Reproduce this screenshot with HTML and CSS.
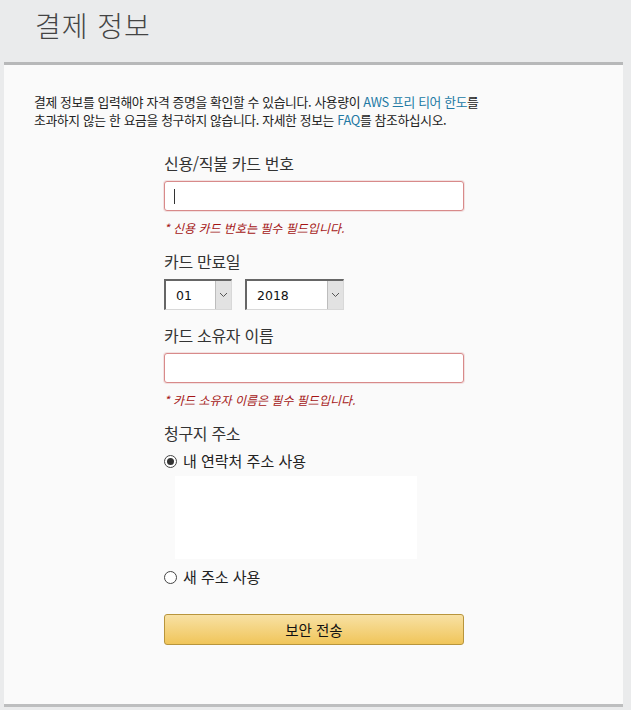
FILE: index.html
```html
<!DOCTYPE html>
<html lang="ko">
<head>
<meta charset="utf-8">
<link rel="stylesheet" href="styles.css">
</head>
<body>
<div class="page">
  <header class="head"><h1 class="title">결제 정보</h1></header>
  <main class="card">
    <p class="intro">결제 정보를 입력해야 자격 증명을 확인할 수 있습니다. 사용량이 <a class="link" href="#">AWS 프리 티어 한도</a>를<br>초과하지 않는 한 요금을 청구하지 않습니다. 자세한 정보는 <a class="link" href="#">FAQ</a>를 참조하십시오.</p>
    <form class="form">
      <div class="field">
        <label class="label">신용/직불 카드 번호</label>
        <div class="input error"><span class="caret"></span></div>
        <div class="err">* 신용 카드 번호는 필수 필드입니다.</div>
      </div>
      <div class="field">
        <label class="label">카드 만료일</label>
        <div class="selects">
          <div class="select s-month"><span class="val">01</span><span class="arrow"><svg width="9" height="6" viewBox="0 0 9 6"><path d="M1 1l3.5 3.5L8 1" fill="none" stroke="#555" stroke-width="1"/></svg></span></div>
          <div class="select s-year"><span class="val">2018</span><span class="arrow"><svg width="9" height="6" viewBox="0 0 9 6"><path d="M1 1l3.5 3.5L8 1" fill="none" stroke="#555" stroke-width="1"/></svg></span></div>
        </div>
      </div>
      <div class="field">
        <label class="label">카드 소유자 이름</label>
        <div class="input error"></div>
        <div class="err">* 카드 소유자 이름은 필수 필드입니다.</div>
      </div>
      <div class="field addr">
        <label class="label">청구지 주소</label>
        <div class="radio"><span class="dot on"></span>내 연락처 주소 사용</div>
        <div class="addrbox"></div>
        <div class="radio"><span class="dot"></span>새 주소 사용</div>
      </div>
      <button class="submit" type="button">보안 전송</button>
    </form>
  </main>
</div>
</body>
</html>
```
FILE: styles.css
```css
* { box-sizing: border-box; }
html, body { margin: 0; padding: 0; }
body {
  background: #eaebec;
  font-family: "Noto Sans CJK KR", "Noto Sans", sans-serif;
  color: #222;
  width: 631px;
  height: 710px;
  overflow: hidden;
}
.page { padding: 0 8px 0 4px; }
.head { height: 62px; padding: 7px 0 0 31px; }
.title {
  margin: 0;
  font-size: 28px;
  font-weight: 300;
  color: #444;
  letter-spacing: 1px;
  line-height: 36px;
}
.card {
  background: #fafafa;
  border-top: 3px solid #b7b8b9;
  border-bottom: 3px solid #bdbebf;
  height: 645px;
  padding: 28px 30px 0 30px;
}
.intro {
  margin: 0;
  font-size: 12.8px;
  line-height: 18px;
  color: #222;
  letter-spacing: -0.35px;
}
.link { color: #2279a4; text-decoration: none; }
.form {
  width: 300px;
  margin: 24px 0 0 130px;
  display: flex;
  flex-direction: column;
}
.field { display: flex; flex-direction: column; }
.label {
  font-size: 16px;
  line-height: 20px;
  color: #333;
  margin-bottom: 8px;
  letter-spacing: -0.3px;
}
.input {
  height: 30px;
  background: #fff;
  border: 1px solid #c9c9c9;
  border-radius: 3px;
  display: flex;
  align-items: center;
  padding-left: 9px;
}
.input.error { border-color: #d88a8a; box-shadow: 0 0 0 1px rgba(220,150,150,0.25); }
.caret { width: 1px; height: 15px; background: #333; }
.err {
  margin-top: 9px;
  font-size: 12px;
  line-height: 15px;
  font-style: italic;
  color: #a41515;
  margin-bottom: 16px;
}
.selects { display: flex; gap: 13px; margin-bottom: 15px; }
.select {
  height: 31px;
  background: #fff;
  border: 1px solid #d8d8d8;
  border-top: 2px solid #666;
  border-left: 2px solid #666;
  display: flex;
  align-items: center;
  justify-content: space-between;
  font-family: "DejaVu Sans", sans-serif;
  font-size: 12.5px;
  color: #111;
}
.s-month { width: 68px; }
.s-year { width: 99px; }
.val { padding-left: 10px; }
.arrow {
  width: 16px;
  height: 28px;
  background: #e2e2e2;
  border-left: 1px solid #bdbdbd;
  display: flex;
  align-items: center;
  justify-content: center;
  align-self: flex-start;
}
.addr .label { margin-bottom: 8px; }
.radio {
  display: flex;
  align-items: center;
  font-size: 15px;
  line-height: 20px;
  color: #222;
  gap: 6px;
}
.dot {
  width: 13px;
  height: 13px;
  border-radius: 50%;
  border: 1px solid #444;
  background: #fff;
  position: relative;
}
.dot.on::after {
  content: "";
  position: absolute;
  left: 2px; top: 2px;
  width: 7px; height: 7px;
  border-radius: 50%;
  background: #333;
}
.addrbox {
  width: 242px;
  height: 83px;
  background: #fff;
  margin: 5px 0 8px 11px;
}
.submit {
  margin-top: 27px;
  height: 31px;
  width: 300px;
  border: 1px solid #b8953c;
  border-radius: 3px;
  background: linear-gradient(#f8e1a4, #f0c55a);
  font-family: "Noto Sans CJK KR", sans-serif;
  font-size: 14.5px;
  color: #111;
  padding: 0;
}
```
